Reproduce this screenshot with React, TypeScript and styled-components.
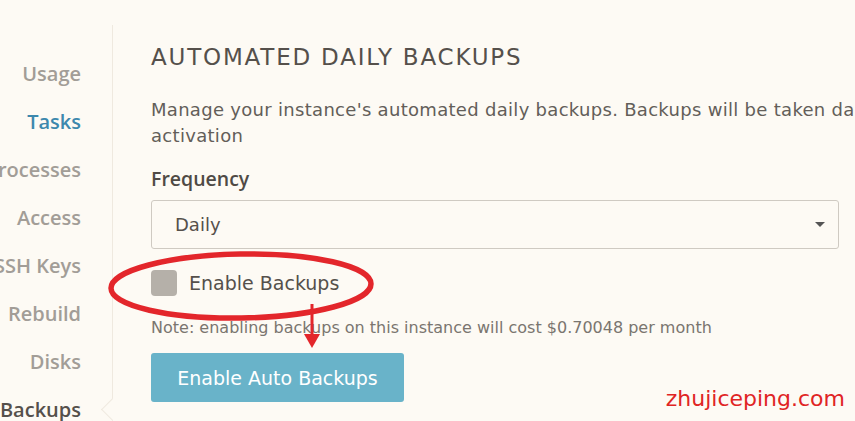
import styled, {createGlobalStyle} from 'styled-components';

const GlobalStyle = createGlobalStyle`
    html, body {
        margin: 0;
        padding: 0;
        background: #fdfaf4;
        overflow: hidden;
    }
    body {
        font-family: "DejaVu Sans", "Open Sans", sans-serif;
        color: #5f5a55;
    }
`;

const navItems = ['Usage', 'Tasks', 'Processes', 'Access', 'SSH Keys', 'Rebuild', 'Disks', 'Backups'];

/**
 * 備份設定頁
 */
const App = () => {
    return <Page>
        <GlobalStyle/>

        <Sidebar>
            {navItems.map(item => (
                <NavItem
                    key={item}
                    $active={item === 'Tasks'}
                    $current={item === 'Backups'}
                >
                    {item}
                </NavItem>
            ))}
            <Notch/>
        </Sidebar>

        <Main>
            <Title>AUTOMATED DAILY BACKUPS</Title>
            <Description>
                Manage your instance's automated daily backups. Backups will be taken daily upon<br/>
                activation
            </Description>

            <Label>Frequency</Label>
            <Select>
                <span>Daily</span>
                <Caret/>
            </Select>

            <CheckRow>
                <CheckBox/>
                <CheckLabel>Enable Backups</CheckLabel>
            </CheckRow>

            <Note>Note: enabling backups on this instance will cost $0.70048 per month</Note>

            <PrimaryButton type="button">Enable Auto Backups</PrimaryButton>

            <Annotation width="300" height="120" viewBox="0 0 300 120">
                <ellipse cx="132" cy="36" rx="130" ry="32" fill="none" stroke="#e3262b" strokeWidth="5.5"
                    transform="rotate(-1 132 36)"/>
                <line x1="203" y1="54" x2="203" y2="88" stroke="#e3262b" strokeWidth="3"/>
                <polygon points="195,84 211,84 203,98" fill="#e3262b"/>
            </Annotation>
        </Main>

        <Watermark>zhujiceping.com</Watermark>
    </Page>;
};

export default App;





const Page = styled.div`
    position: relative;
    display: flex;
    width: 855px;
    height: 421px;
    overflow: hidden;
`;

const Sidebar = styled.nav`
    position: relative;
    flex: 0 0 113px;
    min-width: 0;
    margin-top: 25px;
    padding: 35px 31px 0 0;
    box-sizing: border-box;
    border-right: 1px solid #efe9df;
    display: flex;
    flex-direction: column;
    align-items: flex-end;
    gap: 20px;
`;

const NavItem = styled.a<{$active?: boolean; $current?: boolean}>`
    font-family: "Open Sans", sans-serif;
    font-size: 20px;
    line-height: 28px;
    font-weight: 600;
    white-space: nowrap;
    color: ${p => p.$active ? '#3d88ad' : p.$current ? '#55504b' : '#a29d97'};
`;

const Notch = styled.div`
    position: absolute;
    right: -1px;
    top: 371px;
    width: 14px;
    height: 28px;
    overflow: hidden;

    &::before {
        content: '';
        position: absolute;
        left: 6px;
        top: 4px;
        width: 18px;
        height: 18px;
        background: #fdfaf4;
        border-left: 1px solid #efe9df;
        border-bottom: 1px solid #efe9df;
        transform: rotate(45deg);
    }
`;

const Main = styled.main`
    position: relative;
    flex: 1;
    padding: 42px 0 0 38px;
    display: flex;
    flex-direction: column;
    align-items: flex-start;
`;

const Title = styled.h2`
    margin: 0;
    font-size: 23px;
    line-height: 30px;
    font-weight: 400;
    letter-spacing: 1.8px;
    color: #55504b;
`;

const Description = styled.p`
    margin: 25px 0 0;
    font-size: 18px;
    line-height: 26px;
    letter-spacing: 0.3px;
    white-space: nowrap;
    color: #635e59;
`;

const Label = styled.div`
    margin-top: 18px;
    font-family: "Open Sans", sans-serif;
    font-size: 19.5px;
    line-height: 24px;
    font-weight: 600;
    color: #4f4a45;
`;

const Select = styled.div`
    margin-top: 9px;
    width: 688px;
    height: 49px;
    box-sizing: border-box;
    border: 1px solid #cfcac2;
    border-radius: 3px;
    padding: 0 13px 0 23px;
    display: flex;
    align-items: center;
    justify-content: space-between;
    font-size: 18px;
    color: #55504b;
`;

const Caret = styled.span`
    width: 0;
    height: 0;
    border-left: 5px solid transparent;
    border-right: 5px solid transparent;
    border-top: 5px solid #555;
`;

const CheckRow = styled.label`
    margin-top: 21px;
    display: flex;
    align-items: center;
    gap: 12px;
`;

const CheckBox = styled.span`
    width: 26px;
    height: 26px;
    border-radius: 4px;
    background: #b5b0a9;
`;

const CheckLabel = styled.span`
    font-size: 19px;
    line-height: 26px;
    color: #55504b;
`;

const Note = styled.p`
    margin: 22px 0 0;
    font-size: 16px;
    line-height: 20px;
    color: #7a756f;
    white-space: nowrap;
`;

const PrimaryButton = styled.button`
    margin-top: 15px;
    width: 253px;
    height: 49px;
    border: 0;
    border-radius: 3px;
    background: #69b3c9;
    color: #fff;
    font-family: inherit;
    font-size: 19px;
`;

const Annotation = styled.svg`
    position: absolute;
    left: -4px;
    top: 250px;
    overflow: visible;
`;

const Watermark = styled.div`
    position: absolute;
    right: 10px;
    bottom: 10px;
    font-family: "DejaVu Sans", sans-serif;
    font-size: 22px;
    color: #e02424;
`;
